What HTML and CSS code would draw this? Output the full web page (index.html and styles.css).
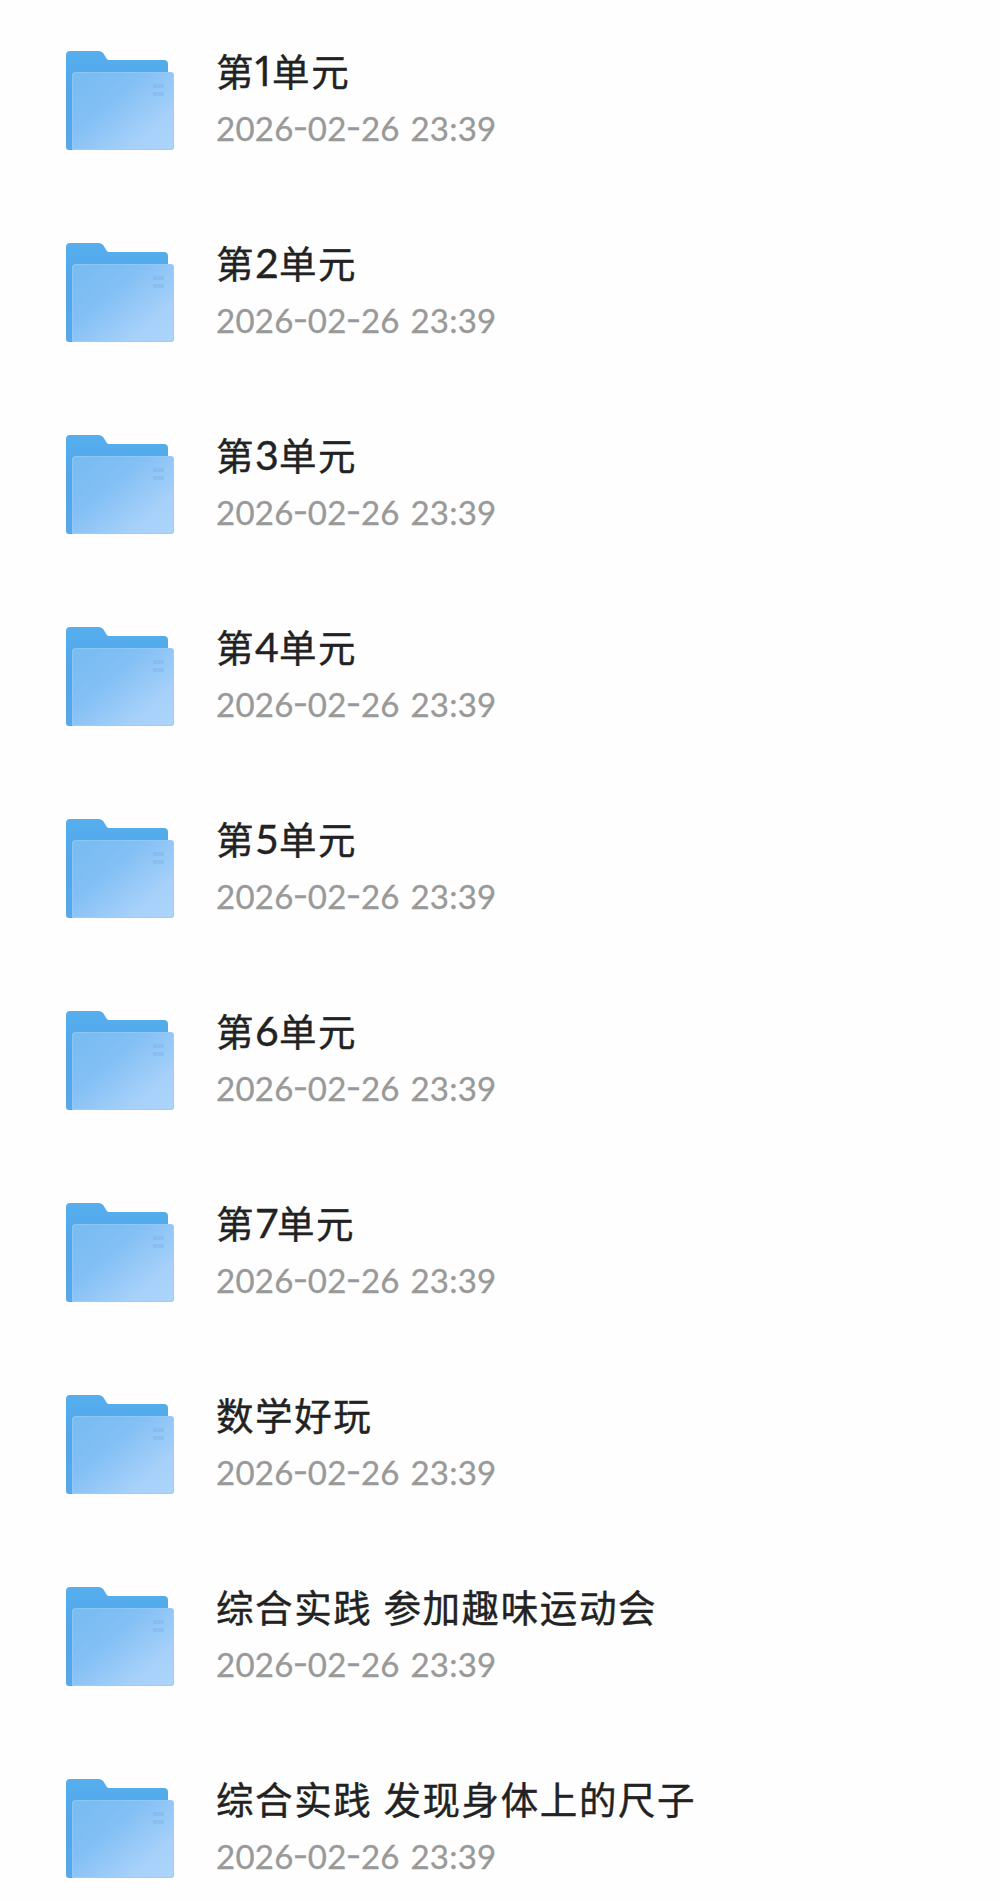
FILE: index.html
```
<!DOCTYPE html>
<html lang="zh-CN">
<head>
    <meta charset="UTF-8">
    <title>文件列表</title>
    <link rel="stylesheet" href="styles.css">
</head>
<body>
    <!-- shared folder icon -->
    <svg class="defs" width="0" height="0">
        <defs>
            <linearGradient id="back" x1="0" y1="0" x2="0" y2="1">
                <stop offset="0" stop-color="#56aeee"/>
                <stop offset="0.5" stop-color="#50a6e8"/>
                <stop offset="1" stop-color="#56aaea"/>
            </linearGradient>
            <linearGradient id="front" x1="0" y1="0.1" x2="0.95" y2="0.95">
                <stop offset="0" stop-color="#78bcf2"/>
                <stop offset="0.35" stop-color="#82bff4"/>
                <stop offset="0.8" stop-color="#a7d1fa"/>
                <stop offset="1" stop-color="#abd4fa"/>
            </linearGradient>
        </defs>
        <symbol id="folder" viewBox="0 0 108 99">
            <path fill="url(#back)" d="M0 4Q0 0 4 0H33Q36 0 37.500 2.500L40.500 7.500Q41.500 9 43.500 9H98Q102 9 102 13V60L20 99H3Q0 99 0 96Z"/>
            <path fill="url(#front)" d="M6 24.500Q6 21 9.500 21H104.500Q108 21 108 24.500V96Q108 99 105 99H6Z"/>
            <path fill="none" stroke="#9acdf7" stroke-opacity="0.6" d="M6.500 98V24.500Q6.500 21.500 9.500 21.500H104"/>
            <path fill="none" stroke="#a9c9ec" d="M107.500 26V96Q107.500 98.500 105 98.500H8"/>
            <path fill="#7db5e8" fill-opacity="0.5" d="M87 33H98V37H87ZM87 41H98V45H87Z"/>
        </symbol>
    </svg>

    <ul class="file-list">
        <li class="file">
            <svg class="icon"><use href="#folder"/></svg>
            <div class="info">
                <div class="name">第<span class="num one">1</span>单元</div>
                <div class="time">2026<i>-</i>02<i>-</i>26 23:39</div>
            </div>
        </li>
        <li class="file">
            <svg class="icon"><use href="#folder"/></svg>
            <div class="info">
                <div class="name">第<span class="num">2</span>单元</div>
                <div class="time">2026<i>-</i>02<i>-</i>26 23:39</div>
            </div>
        </li>
        <li class="file">
            <svg class="icon"><use href="#folder"/></svg>
            <div class="info">
                <div class="name">第<span class="num">3</span>单元</div>
                <div class="time">2026<i>-</i>02<i>-</i>26 23:39</div>
            </div>
        </li>
        <li class="file">
            <svg class="icon"><use href="#folder"/></svg>
            <div class="info">
                <div class="name">第<span class="num">4</span>单元</div>
                <div class="time">2026<i>-</i>02<i>-</i>26 23:39</div>
            </div>
        </li>
        <li class="file">
            <svg class="icon"><use href="#folder"/></svg>
            <div class="info">
                <div class="name">第<span class="num">5</span>单元</div>
                <div class="time">2026<i>-</i>02<i>-</i>26 23:39</div>
            </div>
        </li>
        <li class="file">
            <svg class="icon"><use href="#folder"/></svg>
            <div class="info">
                <div class="name">第<span class="num">6</span>单元</div>
                <div class="time">2026<i>-</i>02<i>-</i>26 23:39</div>
            </div>
        </li>
        <li class="file">
            <svg class="icon"><use href="#folder"/></svg>
            <div class="info">
                <div class="name">第<span class="num seven">7</span>单元</div>
                <div class="time">2026<i>-</i>02<i>-</i>26 23:39</div>
            </div>
        </li>
        <li class="file">
            <svg class="icon"><use href="#folder"/></svg>
            <div class="info">
                <div class="name">数学好玩</div>
                <div class="time">2026<i>-</i>02<i>-</i>26 23:39</div>
            </div>
        </li>
        <li class="file">
            <svg class="icon"><use href="#folder"/></svg>
            <div class="info">
                <div class="name">综合实践 参加趣味运动会</div>
                <div class="time">2026<i>-</i>02<i>-</i>26 23:39</div>
            </div>
        </li>
        <li class="file">
            <svg class="icon"><use href="#folder"/></svg>
            <div class="info">
                <div class="name">综合实践 发现身体上的尺子</div>
                <div class="time">2026<i>-</i>02<i>-</i>26 23:39</div>
            </div>
        </li>
    </ul>
</body>
</html>
```
FILE: styles.css
```
body {
    margin: 0;
    height: 1901px;
    overflow: hidden;
    background: #fefefe;
    font-family: "Noto Sans CJK SC", sans-serif;
}

.defs {
    display: block;
}

.file-list {
    list-style: none;
    margin: 0;
    padding: 4px 0 0 66px;
}

.file {
    display: flex;
    align-items: center;
    gap: 42px;
    height: 192px;
}

.icon {
    width: 108px;
    height: 99px;
    flex: none;
}

.info {
    display: flex;
    flex-direction: column;
}

.name {
    height: 56px;
    line-height: 51px;
    font-size: 37.5px;
    letter-spacing: 1.6px;
    word-spacing: 1px;
    color: #222;
    white-space: nowrap;
    -webkit-text-stroke: 0.4px #222;
}

.num {
    font-family: Lato, sans-serif;
    font-size: 41px;
    letter-spacing: 0;
}

.one {
    font-family: "Noto Sans", sans-serif;
    line-height: 1;
    margin: 0 -3.500px 0 -3px;
}

.seven {
    margin-right: -2px;
}

.time {
    height: 56px;
    line-height: 56px;
    font-family: Lato, sans-serif;
    font-size: 33px;
    letter-spacing: 0.25px;
    word-spacing: 2px;
    color: #999;
    white-space: nowrap;
    -webkit-text-stroke: 0.3px #999;
}

/* wider, slightly raised dash between the date parts */
.time i {
    display: inline-block;
    width: 14.3px;
    font-style: normal;
    transform: translateY(-2px) scaleX(1.3);
    transform-origin: 5px 50%;
}
```
